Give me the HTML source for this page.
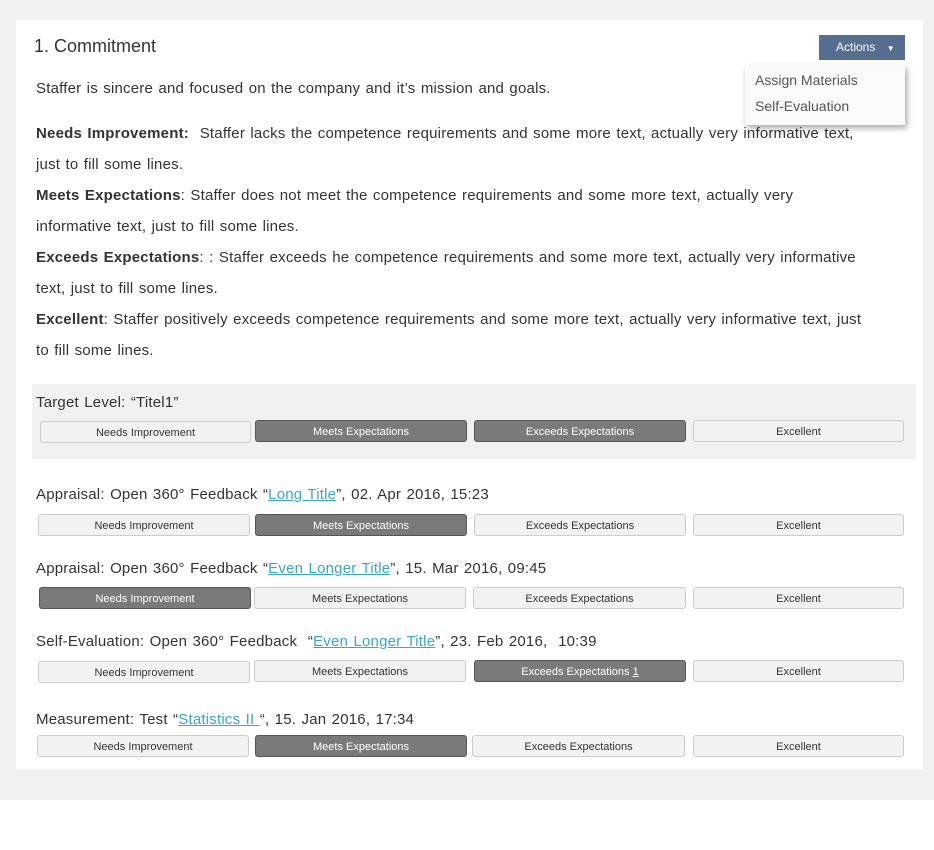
<!DOCTYPE html><html><head><style>
body{margin:0;width:934px;height:850px;background:#fff;font-family:"Liberation Sans",sans-serif;color:#333;position:relative;overflow:hidden}
.bg{position:absolute;left:0;top:0;width:934px;height:800px;background:#f1f1f1}
.card{position:absolute;left:16px;top:20px;width:907px;height:749px;background:#fff}
.a{position:absolute;white-space:nowrap}
.t{font-size:15px;letter-spacing:0.2px;word-spacing:1px}
.btn{position:absolute;height:22px;border:1px solid #ccc;border-radius:3px;background:#f2f2f2;font-size:11px;color:#333;text-align:center;line-height:22px;box-sizing:border-box}
.on{background:#7a7a7a;color:#fff;border-color:#555}
a{color:#3aa7c7;text-decoration:underline}
</style></head><body>
<div class="bg"></div><div class="card"></div>
<div class="a" style="left:34px;top:36px;font-size:18px;color:#333">1. Commitment</div>
<div class="a t" style="left:36px;top:80px">Staffer is sincere and focused on the company and it’s mission and goals.</div>
<div class="a t" style="left:36px;top:118px;line-height:31px;white-space:normal;width:880px"><b>Needs Improvement:</b>&nbsp; Staffer lacks the competence requirements and some more text, actually very informative text,<br>just to fill some lines.<br><b>Meets Expectations</b>: Staffer does not meet the competence requirements and some more text, actually very<br>informative text, just to fill some lines.<br><b>Exceeds Expectations</b>: : Staffer exceeds he competence requirements and some more text, actually very informative<br>text, just to fill some lines.<br><b>Excellent</b>: Staffer positively exceeds competence requirements and some more text, actually very informative text, just<br>to fill some lines.</div>
<div class="a" style="left:819px;top:35px;width:86px;height:25px;background:#566f91;color:#fff;font-size:12px;line-height:25px;text-indent:17px">Actions <span style="font-size:8px;margin-left:8px">▼</span></div>
<div class="a" style="left:745px;top:65px;width:160px;height:60px;background:#fafafa;box-shadow:2px 3px 6px rgba(0,0,0,.35)"></div>
<div class="a" style="left:755px;top:72px;font-size:14px;color:#555">Assign Materials</div>
<div class="a" style="left:755px;top:98px;font-size:14px;color:#555">Self-Evaluation</div>
<div class="a" style="left:32px;top:384px;width:884px;height:75px;background:#f1f1f1"></div>
<div class="a t" style="left:36px;top:394px">Target Level: “Titel1”</div>
<div class="btn" style="left:40px;top:421px;width:211px">Needs Improvement</div>
<div class="btn on" style="left:255px;top:420px;width:212px">Meets Expectations</div>
<div class="btn on" style="left:474px;top:420px;width:212px">Exceeds Expectations</div>
<div class="btn" style="left:693px;top:420px;width:211px">Excellent</div>
<div class="a t" style="left:36px;top:486px">Appraisal: Open 360° Feedback “<a>Long Title</a>”, 02. Apr 2016, 15:23</div>
<div class="btn" style="left:38px;top:514px;width:212px">Needs Improvement</div>
<div class="btn on" style="left:255px;top:514px;width:212px">Meets Expectations</div>
<div class="btn" style="left:474px;top:514px;width:212px">Exceeds Expectations</div>
<div class="btn" style="left:693px;top:514px;width:211px">Excellent</div>
<div class="a t" style="left:36px;top:560px">Appraisal: Open 360° Feedback “<a>Even Longer Title</a>”, 15. Mar 2016, 09:45</div>
<div class="btn on" style="left:39px;top:587px;width:212px">Needs Improvement</div>
<div class="btn" style="left:254px;top:587px;width:212px">Meets Expectations</div>
<div class="btn" style="left:473px;top:587px;width:213px">Exceeds Expectations</div>
<div class="btn" style="left:693px;top:587px;width:211px">Excellent</div>
<div class="a t" style="left:36px;top:633px">Self-Evaluation: Open 360° Feedback &nbsp;“<a>Even Longer Title</a>”, 23. Feb 2016, &nbsp;10:39</div>
<div class="btn" style="left:38px;top:661px;width:212px">Needs Improvement</div>
<div class="btn" style="left:254px;top:660px;width:212px">Meets Expectations</div>
<div class="btn on" style="left:474px;top:660px;width:212px">Exceeds Expectations <u>1</u></div>
<div class="btn" style="left:693px;top:660px;width:211px">Excellent</div>
<div class="a t" style="left:36px;top:711px">Measurement: Test “<a>Statistics II </a>“, 15. Jan 2016, 17:34</div>
<div class="btn" style="left:37px;top:735px;width:212px">Needs Improvement</div>
<div class="btn on" style="left:255px;top:735px;width:212px">Meets Expectations</div>
<div class="btn" style="left:472px;top:735px;width:213px">Exceeds Expectations</div>
<div class="btn" style="left:693px;top:735px;width:211px">Excellent</div>
</body></html>
